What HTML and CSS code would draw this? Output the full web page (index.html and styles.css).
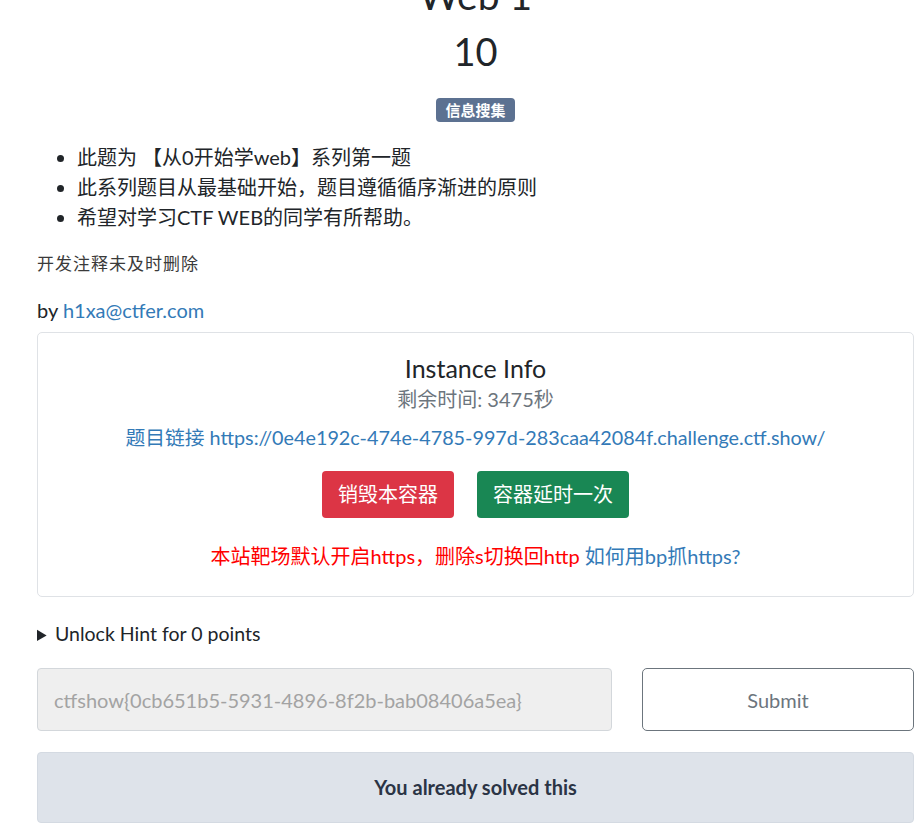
FILE: index.html
```html
<!DOCTYPE html>
<html lang="zh">
<head>
<meta charset="utf-8">
<title>Web 1</title>
<link rel="stylesheet" href="styles.css">
</head>
<body>
<div class="page">
  <h1 class="title">Web 1</h1>
  <h2 class="value">10</h2>
  <div class="tags"><span class="badge">信息搜集</span></div>
  <ul class="desc">
    <li>此题为 【从0开始学web】系列第一题</li>
    <li>此系列题目从最基础开始，题目遵循循序渐进的原则</li>
    <li>希望对学习CTF WEB的同学有所帮助。</li>
  </ul>
  <p class="note">开发注释未及时删除</p>
  <p class="author">by <a href="#">h1xa@ctfer.com</a></p>
  <div class="card">
    <h3 class="card-title">Instance Info</h3>
    <p class="remain">剩余时间: 3475秒</p>
    <p class="link"><a href="#">题目链接 https://0e4e192c-474e-4785-997d-283caa42084f.challenge.ctf.show/</a></p>
    <div class="actions">
      <button class="btn btn-danger">销毁本容器</button>
      <button class="btn btn-success">容器延时一次</button>
    </div>
    <p class="warn"><span class="red">本站靶场默认开启https，删除s切换回http</span> <a href="#">如何用bp抓https?</a></p>
  </div>
  <details class="hint"><summary>Unlock Hint for 0 points</summary></details>
  <div class="submit-row">
    <input class="flag" type="text" disabled placeholder="ctfshow{0cb651b5-5931-4896-8f2b-bab08406a5ea}">
    <button class="btn-submit">Submit</button>
  </div>
  <div class="solved">You already solved this</div>
</div>
</body>
</html>
```

FILE: styles.css
```css
html, body {
  margin: 0;
  padding: 0;
  background: #fff;
}
body {
  font-family: Lato, "Noto Sans CJK SC", sans-serif;
  font-size: 20px;
  color: #212529;
  overflow: hidden;
}
.page {
  width: 877px;
  margin-left: 37px;
}
a {
  color: #337ab7;
  text-decoration: none;
}
.title {
  margin: -29px 0 0;
  font-size: 39px;
  line-height: 48px;
  font-weight: 400;
  text-align: center;
}
.value {
  margin: 8px 0 0;
  font-size: 38px;
  line-height: 48px;
  font-weight: 400;
  text-align: center;
}
.tags {
  margin-top: 21px;
  text-align: center;
  line-height: 24px;
  height: 24px;
}
.badge {
  display: inline-block;
  background: #5c7191;
  color: #fff;
  font-weight: 700;
  font-size: 15px;
  line-height: 24px;
  padding: 0 9px;
  border-radius: 4px;
}
.desc {
  margin: 22px 0 0;
  padding-left: 40px;
  font-size: 20px;
  line-height: 30px;
}
.note {
  margin: 20px 0 0;
  font-size: 17px;
  letter-spacing: 1px;
  line-height: 24px;
  color: #3a3a3a;
}
.author {
  margin: 22px 0 0;
  font-size: 20px;
  line-height: 24px;
}
.card {
  margin-top: 10px;
  border: 1px solid #dfe2e6;
  border-radius: 5px;
  padding: 20px 16px 27px;
  text-align: center;
}
.card-title {
  margin: 0;
  font-size: 25px;
  line-height: 30px;
  font-weight: 400;
}
.remain {
  margin: 4px 0 0;
  font-size: 20px;
  line-height: 24px;
  color: #6c757d;
}
.link {
  margin: 13px 0 0;
  font-size: 19.8px;
  line-height: 26px;
}
.actions {
  margin-top: 21px;
  display: flex;
  justify-content: center;
  gap: 23px;
}
.btn {
  font-family: Lato, "Noto Sans CJK SC", sans-serif;
  font-size: 20px;
  line-height: 27px;
  padding: 10px 16px;
  border: 0;
  border-radius: 4px;
  color: #fff;
}
.btn-danger { background: #dc3545; }
.btn-success { background: #198754; }
.warn {
  margin: 25px 0 0;
  font-size: 20px;
  line-height: 26px;
}
.red { color: #ff0000; }
.hint {
  margin-top: 25px;
  height: 24px;
  overflow: hidden;
  font-size: 19.5px;
  line-height: 24px;
}
.hint summary {
  cursor: pointer;
  height: 24px;
}
.hint summary::marker {
  font-size: 17px;
}
.submit-row {
  margin-top: 22px;
  display: grid;
  grid-template-columns: 575px 1fr;
  gap: 30px;
}
.flag {
  box-sizing: border-box;
  height: 63px;
  font-family: Lato, sans-serif;
  font-size: 20px;
  padding: 0 16px;
  background: #efefef;
  border: 1px solid #d3d7db;
  border-radius: 4px;
  color: #999;
}
.flag::placeholder {
  color: #a3a3a3;
}
.btn-submit {
  box-sizing: border-box;
  height: 63px;
  font-family: Lato, sans-serif;
  font-size: 20px;
  background: #fff;
  color: #6c757d;
  border: 1px solid #6c757d;
  border-radius: 5px;
}
.solved {
  margin-top: 21px;
  box-sizing: border-box;
  height: 71px;
  line-height: 69px;
  background: #dee3ea;
  border: 1px solid #d4dae2;
  border-radius: 4px;
  text-align: center;
  font-weight: 700;
  font-size: 20px;
  color: #2b3445;
}
```
